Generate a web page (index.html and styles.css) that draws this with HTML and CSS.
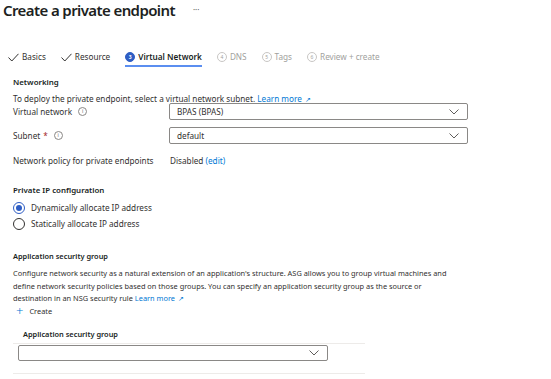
FILE: index.html
```html
<!DOCTYPE html>
<html lang="en">
  <head>
    <meta charset="UTF-8" />
    <title>Create a private endpoint</title>
    <link rel="stylesheet" href="styles.css">
  </head>
  <body>
    <div class="header">
      <h1>Create a private endpoint</h1>
      <span class="more">···</span>
    </div>
    <div class="tabs">
      <div class="tab done">
        <svg width="11" height="9" viewBox="0 0 11 9"><path d="M0.5 4.5 L3.8 8 L10.5 0.8" fill="none" stroke="#323130" stroke-width="1"/></svg>
        <span>Basics</span>
      </div>
      <div class="tab done">
        <svg width="11" height="9" viewBox="0 0 11 9"><path d="M0.5 4.5 L3.8 8 L10.5 0.8" fill="none" stroke="#323130" stroke-width="1"/></svg>
        <span>Resource</span>
      </div>
      <div class="tab active">
        <span class="num">3</span>
        <span>Virtual Network</span>
      </div>
      <div class="tab off">
        <span class="num">4</span>
        <span>DNS</span>
      </div>
      <div class="tab off">
        <span class="num">5</span>
        <span>Tags</span>
      </div>
      <div class="tab off">
        <span class="num">6</span>
        <span>Review + create</span>
      </div>
    </div>

    <div class="content">
      <h2>Networking</h2>
      <p class="desc">To deploy the private endpoint, select a virtual network subnet. <a href="#">Learn more <span class="ext">&#8599;</span></a></p>
      <div class="row">
        <label>Virtual network <span class="info">i</span></label>
        <div class="select"><span>BPAS (BPAS)</span><svg width="10" height="6" viewBox="0 0 10 6"><path d="M0.5 0.5 L5 5 L9.5 0.5" fill="none" stroke="#605e5c"/></svg></div>
      </div>
      <div class="row">
        <label>Subnet <span class="req">*</span> <span class="info">i</span></label>
        <div class="select"><span>default</span><svg width="10" height="6" viewBox="0 0 10 6"><path d="M0.5 0.5 L5 5 L9.5 0.5" fill="none" stroke="#605e5c"/></svg></div>
      </div>
      <div class="row policy">
        <label>Network policy for private endpoints</label>
        <div class="value">Disabled <a href="#">(edit)</a></div>
      </div>

      <h2 class="ip">Private IP configuration</h2>
      <div class="radio checked"><span class="circle"></span>Dynamically allocate IP address</div>
      <div class="radio"><span class="circle"></span>Statically allocate IP address</div>

      <div class="asg-section">
        <h2 class="asg">Application security group</h2>
        <p class="para">Configure network security as a natural extension of an application's structure. ASG allows you to group virtual machines and define network security policies based on those groups. You can specify an application security group as the source or destination in an NSG security rule <a href="#">Learn more <span class="ext">&#8599;</span></a></p>
        <div class="create"><span class="plus">+</span>Create</div>
        <div class="table">
          <div class="thead">Application security group</div>
          <div class="trow">
            <div class="select wide"><span></span><svg width="10" height="6" viewBox="0 0 10 6"><path d="M0.5 0.5 L5 5 L9.5 0.5" fill="none" stroke="#605e5c"/></svg></div>
          </div>
        </div>
      </div>
    </div>
  </body>
</html>
```

FILE: styles.css
```css
body {
  margin: 0;
  font-family: "Noto Sans", "Open Sans", sans-serif;
  color: #323130;
  font-size: 8.2px;
  line-height: 12px;
  background: #fff;
}
a {
  color: #0078d4;
  text-decoration: none;
}
.header {
  display: flex;
  align-items: center;
  padding: 0 0 0 3px;
  height: 20px;
}
h1 {
  margin: 0;
  font-size: 15px;
  line-height: 20px;
  font-weight: 600;
  color: #201f1e;
  letter-spacing: -0.6px;
}
.more {
  margin-left: 18px;
  font-size: 8px;
  color: #605e5c;
}
.tabs {
  display: flex;
  margin-top: 29px;
  padding-left: 8px;
  height: 18px;
}
.tab {
  display: flex;
  align-items: center;
  gap: 3px;
  margin-right: 15px;
  height: 16px;
  border-bottom: 2px solid transparent;
}
.tab.active {
  border-bottom-color: #5b8ef0;
  font-weight: 600;
  color: #201f1e;
}
.tab.off {
  color: #a19f9d;
}
.num {
  width: 8px;
  height: 8px;
  border-radius: 50%;
  border: 1px solid #c8c6c4;
  font-size: 5px;
  line-height: 8px;
  display: flex;
  align-items: center;
  justify-content: center;
  font-weight: 400;
}
.tab.active .num {
  background: #2f5ec4;
  border-color: #2f5ec4;
  color: #fff;
  font-weight: 700;
}
.content {
  padding: 9px 0 0 13px;
}
h2 {
  margin: 0;
  font-size: 7.9px;
  font-weight: 600;
  color: #201f1e;
  line-height: 12px;
}
.desc {
  margin: 6px 0 0;
  height: 9px;
  line-height: 9px;
}
.ext {
  font-size: 7px;
  line-height: 0;
  margin-left: 1px;
}
.row {
  display: flex;
  align-items: center;
  margin-bottom: 7px;
}
.row label {
  width: 156px;
  display: flex;
  align-items: center;
  gap: 3px;
}
.req {
  color: #a4262c;
}
.info {
  width: 7px;
  height: 7px;
  border: 1px solid #8a8886;
  border-radius: 50%;
  font-size: 5px;
  line-height: 7px;
  display: inline-flex;
  align-items: center;
  justify-content: center;
  color: #605e5c;
  margin-left: 3px;
}
.select {
  width: 299px;
  height: 17px;
  box-sizing: border-box;
  border: 1px solid #8a8886;
  border-radius: 2px;
  display: flex;
  align-items: center;
  justify-content: space-between;
  padding: 0 8px 0 7px;
}
.policy {
  margin-top: 11px;
}
.value {
  padding-left: 1px;
}
.ip {
  margin-top: 17px;
  margin-bottom: 4px;
}
.radio {
  display: flex;
  align-items: center;
  gap: 6px;
  height: 16px;
}
.circle {
  width: 10px;
  height: 10px;
  border: 1px solid #323130;
  border-radius: 50%;
  display: flex;
  align-items: center;
  justify-content: center;
}
.radio.checked .circle {
  border-color: #2f5ec4;
}
.radio.checked .circle::after {
  content: "";
  width: 6px;
  height: 6px;
  border-radius: 50%;
  background: #2f5ec4;
}
.asg-section {
  font-size: 7.4px;
}
.asg {
  margin-top: 18px;
  font-size: 7.4px;
}
.para {
  margin: 5px 0 0;
  width: 446px;
  line-height: 12.5px;
}
.create {
  display: flex;
  align-items: center;
  margin-top: -1px;
  padding-left: 3px;
  height: 14px;
}
.plus {
  font-size: 13px;
  color: #0078d4;
  margin-right: 6px;
  font-weight: 300;
}
.table {
  margin-top: 9px;
  width: 352px;
}
.thead {
  font-weight: 600;
  color: #201f1e;
  padding-left: 10px;
  height: 16px;
  line-height: 14px;
  border-bottom: 1px solid #edebe9;
}
.trow {
  padding: 1px 0 12px 5px;
  border-bottom: 1px solid #edebe9;
}
.select.wide {
  width: 310px;
  height: 16px;
}
```
